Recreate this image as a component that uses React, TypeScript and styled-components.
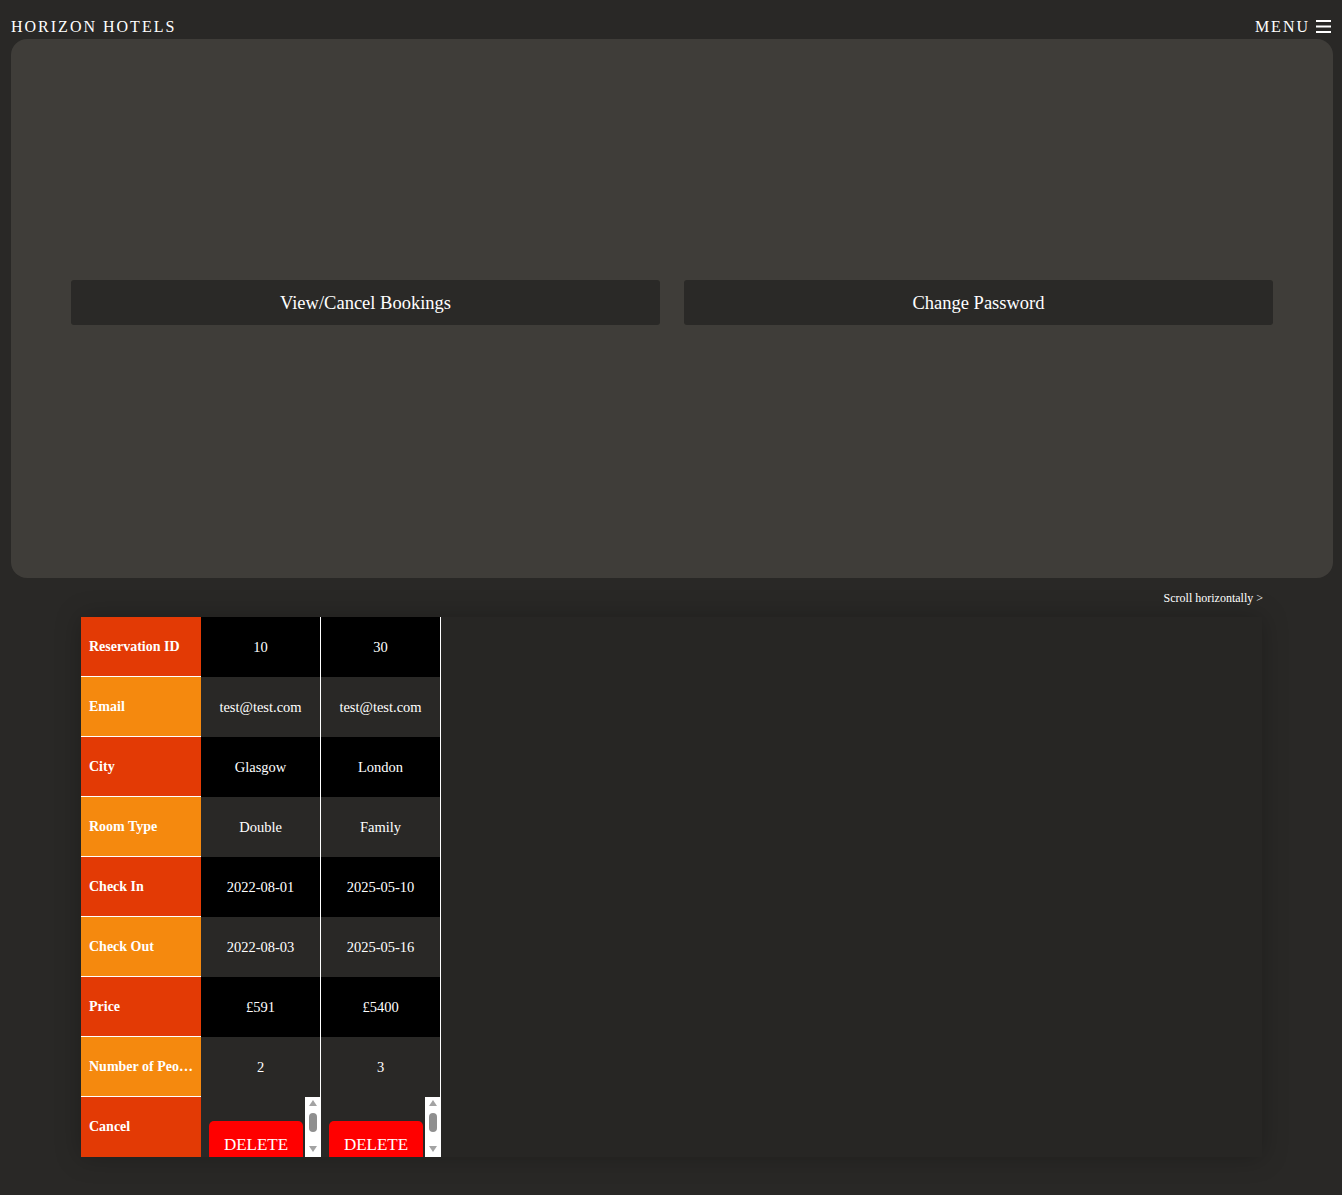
import styled, { createGlobalStyle } from 'styled-components';

// Data
interface Ibooking {
	id: number;
	email: string;
	city: string;
	roomType: string;
	checkIn: string;
	checkOut: string;
	price: string;
	people: number;
}

const bookings: Ibooking[] = [
	{ id: 10, email: 'test@test.com', city: 'Glasgow', roomType: 'Double', checkIn: '2022-08-01', checkOut: '2022-08-03', price: '£591', people: 2 },
	{ id: 30, email: 'test@test.com', city: 'London', roomType: 'Family', checkIn: '2025-05-10', checkOut: '2025-05-16', price: '£5400', people: 3 },
];

const labels = ['Reservation ID', 'Email', 'City', 'Room Type', 'Check In', 'Check Out', 'Price', 'Number of People', 'Cancel'];

const serif = `"Liberation Serif", "DejaVu Serif", serif`;

const GlobalStyle = createGlobalStyle`
	body {
		margin: 0;
		background-color: #292826;
		color: #fff;
		font-family: ${serif};
	}
`;

export default function App() {
	return (
		<>
			<GlobalStyle />
			<Header>
				<Logo>Horizon Hotels</Logo>
				<MenuButton>
					Menu
					<svg width="15" height="13" viewBox="0 0 15 13">
						<rect x="0" y="0" width="15" height="2" fill="#fff" />
						<rect x="0" y="5.5" width="15" height="2" fill="#fff" />
						<rect x="0" y="11" width="15" height="2" fill="#fff" />
					</svg>
				</MenuButton>
			</Header>
			<Panel>
				<ButtonRow>
					<PanelButton>View/Cancel Bookings</PanelButton>
					<PanelButton>Change Password</PanelButton>
				</ButtonRow>
			</Panel>
			<ScrollHint>Scroll horizontally &gt;</ScrollHint>
			<TableWrap>
				<Column>
					{labels.map((label, i) => (
						<Label key={label} $odd={i % 2 === 0}>
							{label}
						</Label>
					))}
				</Column>
				{bookings.map((b) => {
					const values = [b.id, b.email, b.city, b.roomType, b.checkIn, b.checkOut, b.price, b.people];
					return (
						<DataColumn key={b.id}>
							{values.map((v, i) => (
								<Cell key={i} $odd={i % 2 === 0}>
									{v}
								</Cell>
							))}
							<CancelCell>
								<CancelContent>
									<DeleteButton>DELETE</DeleteButton>
								</CancelContent>
								<ScrollRail>
									<Arrow $up />
									<Thumb />
									<Arrow />
								</ScrollRail>
							</CancelCell>
						</DataColumn>
					);
				})}
			</TableWrap>
		</>
	);
}

const Header = styled.header`
	display: flex;
	justify-content: space-between;
	align-items: center;
	padding: 15px 11px 0;
	height: 24px;
`;

const Logo = styled.div`
	font-size: 16px;
	letter-spacing: 2px;
	text-transform: uppercase;
	line-height: 24px;
`;

const MenuButton = styled.div`
	display: flex;
	align-items: center;
	gap: 6px;
	font-size: 16px;
	letter-spacing: 2px;
	text-transform: uppercase;
	line-height: 24px;

	svg {
		margin-top: -2px;
	}
`;

const Panel = styled.section`
	margin: 0 9px 0 11px;
	height: 539px;
	background-color: #3f3d39;
	border-radius: 16px;
	box-sizing: border-box;
	padding: 241px 60px 0;
`;

const ButtonRow = styled.div`
	display: grid;
	grid-template-columns: 1fr 1fr;
	gap: 24px;
`;

const PanelButton = styled.button`
	height: 45px;
	padding-top: 3px;
	background-color: #2a2927;
	border: none;
	border-radius: 3px;
	color: #fff;
	font-family: ${serif};
	font-size: 18.5px;
`;

const ScrollHint = styled.div`
	text-align: right;
	font-size: 12px;
	padding: 13px 79px 0 0;
	height: 39px;
	box-sizing: border-box;
`;

const TableWrap = styled.div`
	display: flex;
	margin: 0 80px 38px 81px;
	height: 540px;
	background-color: #272624;
	box-shadow: 0 0 24px rgba(0, 0, 0, 0.25);
	overflow-x: auto;
`;

const Column = styled.div`
	display: flex;
	flex-direction: column;
	width: 120px;
	flex-shrink: 0;
`;

const DataColumn = styled(Column)`
	border-right: 1px solid #fff;
	width: 119px;
`;

const Label = styled.div<{ $odd: boolean }>`
	height: 59px;
	border-bottom: 1px solid #fff;
	background-color: ${(p) => (p.$odd ? '#e33a05' : '#f5890e')};
	padding: 0 8px;
	font-size: 14px;
	font-weight: bold;
	white-space: nowrap;
	overflow: hidden;
	text-overflow: ellipsis;
	line-height: 59px;

	&:last-child {
		height: 60px;
		line-height: 60px;
		border-bottom: none;
	}
`;

const Cell = styled.div<{ $odd: boolean }>`
	height: 60px;
	background-color: ${(p) => (p.$odd ? '#000' : '#292826')};
	display: flex;
	align-items: center;
	justify-content: center;
	font-size: 14.5px;
	white-space: nowrap;
`;

const CancelCell = styled.div`
	display: flex;
	height: 60px;
	background-color: #292826;
`;

const CancelContent = styled.div`
	flex: 1;
	overflow: hidden;
	padding: 24px 0 0 8px;
`;

const ScrollRail = styled.div`
	width: 15px;
	background-color: #fff;
	display: flex;
	flex-direction: column;
	align-items: center;
	padding-top: 3px;
	box-sizing: border-box;
`;

const Arrow = styled.div<{ $up?: boolean }>`
	width: 0;
	height: 0;
	border-left: 4px solid transparent;
	border-right: 4px solid transparent;
	${(p) => (p.$up ? 'border-bottom: 6px solid #a3a3a3;' : 'border-top: 6px solid #a3a3a3; margin-top: 14px;')}
`;

const Thumb = styled.div`
	width: 8px;
	height: 19px;
	margin-top: 7px;
	border-radius: 4px;
	background-color: #8f8f8f;
`;

const DeleteButton = styled.button`
	display: block;
	width: 94px;
	height: 48px;
	background-color: #ff0000;
	border: none;
	border-radius: 5px;
	color: #fff;
	font-family: ${serif};
	font-size: 17px;
	padding: 0;
`;
